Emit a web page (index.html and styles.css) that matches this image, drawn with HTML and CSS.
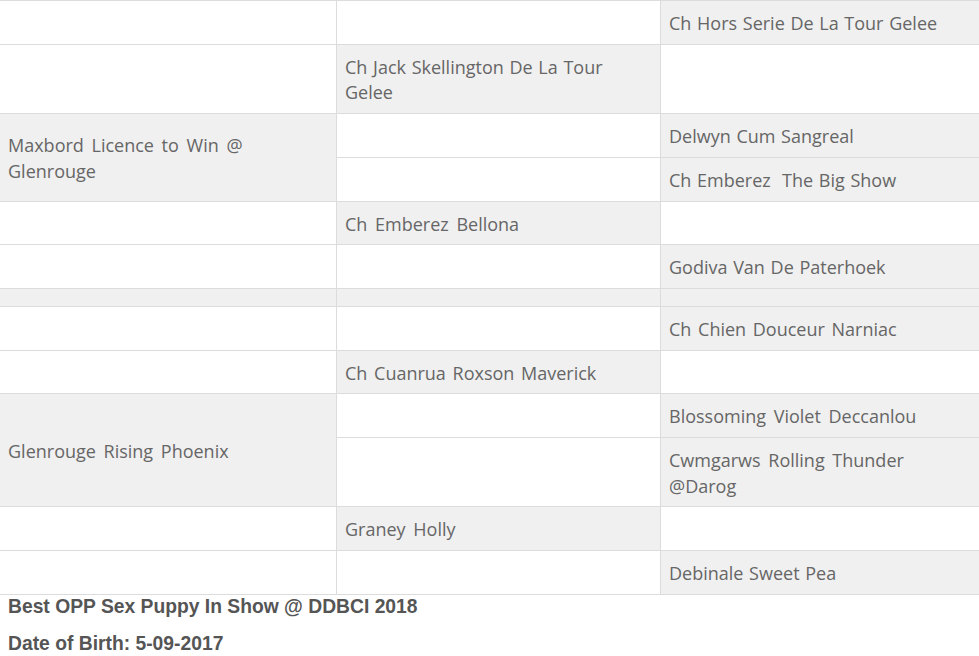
FILE: index.html
```html
<!DOCTYPE html>
<html>
<head>
<meta charset="utf-8">
<link rel="stylesheet" href="styles.css">
</head>
<body>
<table class="ped">
  <colgroup><col class="c1"><col class="c2"><col class="c3"></colgroup>
  <tr><td></td><td></td><td class="g">Ch Hors Serie De La Tour Gelee</td></tr>
  <tr><td></td><td class="g">Ch Jack Skellington De La Tour Gelee</td><td></td></tr>
  <tr><td class="g w" rowspan="2">Maxbord Licence to Win @ Glenrouge</td><td></td><td class="g">Delwyn Cum Sangreal</td></tr>
  <tr><td></td><td class="g">Ch Emberez&nbsp; The Big Show</td></tr>
  <tr><td></td><td class="g w">Ch Emberez Bellona</td><td></td></tr>
  <tr><td></td><td></td><td class="g">Godiva Van De Paterhoek</td></tr>
  <tr class="sep"><td class="g"></td><td class="g"></td><td class="g"></td></tr>
  <tr><td></td><td></td><td class="g m">Ch Chien Douceur Narniac</td></tr>
  <tr><td></td><td class="g m">Ch Cuanrua Roxson Maverick</td><td></td></tr>
  <tr><td class="g w" rowspan="2">Glenrouge Rising Phoenix</td><td></td><td class="g w">Blossoming Violet Deccanlou</td></tr>
  <tr><td></td><td class="g w">Cwmgarws Rolling Thunder @Darog</td></tr>
  <tr><td></td><td class="g w">Graney Holly</td><td></td></tr>
  <tr><td></td><td></td><td class="g">Debinale Sweet Pea</td></tr>
</table>
<div class="info">
  <p>Best OPP Sex Puppy In Show @ DDBCI 2018</p>
  <p>Date of Birth: 5-09-2017</p>
</div>
</body>
</html>
```
FILE: styles.css
```css
html, body { margin: 0; padding: 0; background: #fff; }
.ped {
  border-collapse: collapse;
  width: 981px;
  margin-left: -1px;
  table-layout: fixed;
  font-family: "Open Sans", sans-serif;
  font-size: 18px;
  line-height: 25.7px;
  color: #666;
  word-spacing: 1px;
}
.c1 { width: 337px; }
.c2 { width: 324px; }
.c3 { width: 320px; }
.ped td {
  border: 1px solid #dcdcdc;
  padding: 10px 8px 7px;
  vertical-align: middle;
  background: #fff;
}
.ped td.g { background: #f0f0f0; }
.ped td.w { word-spacing: 3px; }
.ped td.m { word-spacing: 2px; }
.ped tr.sep td { line-height: 0; height: 0; }
.info {
  padding: 1px 8px 0;
  font-family: "Liberation Sans", Arial, sans-serif;
  font-weight: bold;
  font-size: 19.3px;
  color: #555;
}
.info p { margin: 0 0 15px; line-height: 22px; }
```
